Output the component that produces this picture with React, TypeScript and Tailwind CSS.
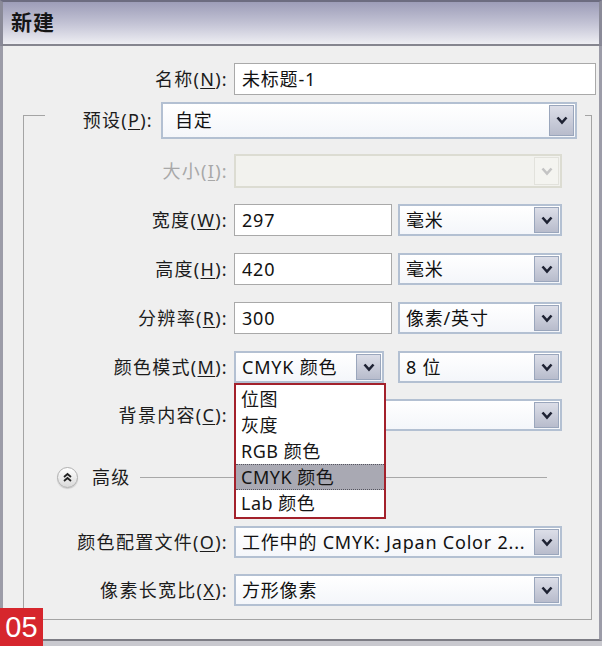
import type { ReactNode } from 'react'

const font = { fontFamily: '"Noto Sans", "Noto Sans CJK SC", sans-serif' }

function Chevron({ disabled }: { disabled?: boolean }) {
  return (
    <svg width="12" height="9" viewBox="0 0 12 9">
      <polyline
        points="1.5,1.5 6,6.5 10.5,1.5"
        fill="none"
        stroke={disabled ? '#c4c4c4' : '#1e2233'}
        strokeWidth="2.6"
        strokeLinejoin="miter"
      />
    </svg>
  )
}

function Label({ text, mk, disabled }: { text: string; mk: string; disabled?: boolean }) {
  return (
    <span className={`tracking-[1.3px] ${disabled ? 'text-[#a8a8a8]' : 'text-[#1c1c1c]'}`}>
      {text}(<span className="underline underline-offset-2">{mk}</span>):
    </span>
  )
}

function Select({
  value,
  w,
  h = 'h-[32px]',
  disabled,
}: {
  value?: ReactNode
  w: string
  h?: string
  disabled?: boolean
}) {
  if (disabled) {
    return (
      <div className={`${w} ${h} flex border-2 border-[#dcdcd2] bg-[#f2f2ee]`}>
        <div className="flex-1" />
        <div className="w-[25px] m-[1px] flex items-center justify-center border border-[#e2e2dc] bg-[#f4f4f0]">
          <Chevron disabled />
        </div>
      </div>
    )
  }
  return (
    <div className={`${w} ${h} flex border-2 border-[#b3c0d2] bg-gradient-to-b from-white to-[#f4f6fa]`}>
      <div className="flex-1 flex items-center pl-[6px] text-[18px] tracking-[0.8px] text-[#111] whitespace-nowrap overflow-hidden">
        {value}
      </div>
      <div className="w-[25px] my-[1px] mr-[1px] flex items-center justify-center border border-[#9aa6bc] bg-gradient-to-b from-[#dcdee8] to-[#b8bccc]">
        <Chevron />
      </div>
    </div>
  )
}

function Input({ value, w }: { value: string; w: string }) {
  return (
    <div className={`${w} h-[32px] flex items-center pl-[7px] border border-[#a9a9a9] bg-white text-[18px] tracking-[0.8px] text-[#111]`}>
      {value}
    </div>
  )
}

function Row({ mt, children, label }: { mt: string; children: ReactNode; label: ReactNode }) {
  return (
    <div className={`${mt} flex items-center`}>
      <div className="w-[204px] text-right text-[18px]">{label}</div>
      <div className="ml-[6px] flex items-center">{children}</div>
    </div>
  )
}

const modes = ['位图', '灰度', 'RGB 颜色', 'CMYK 颜色', 'Lab 颜色']

export default function App() {
  return (
    <div className="w-[602px] h-[646px] relative overflow-hidden bg-[#c9c9cf]" style={font}>
      {/* title bar */}
      <div className="h-[46px] border-t-2 border-t-[#6c6c80] border-b-2 border-b-[#85858f] border-x-[3px] border-x-[#8a8a98] bg-gradient-to-b from-[#9d9db8] via-[#c2c2d4] to-[#eeeef3] flex items-center pl-[8px]">
        <span className="text-[21px] font-bold text-[#161616] tracking-[1px]">新建</span>
      </div>

      {/* body */}
      <div className="h-[595px] bg-[#efefef] border-x-[3px] border-x-[#9c9ca8] border-b-2 border-b-[#7c7c84] flex flex-col">
        {/* name row */}
        <div className="mt-[17px] flex items-center">
          <div className="w-[225px] text-right text-[18px]">
            <Label text="名称" mk="N" />
          </div>
          <div className="ml-[6px]">
            <Input value="未标题-1" w="w-[362px]" />
          </div>
        </div>

        {/* group box */}
        <div className="mt-[20px] ml-[20px] mr-[7px] border-l border-r border-b border-[#a4a4a4] pb-[13px] flex flex-col">
          <div className="mt-[-13px] flex items-start">
            <div className="w-[21px] mt-[13px] border-t border-[#a4a4a4]" />
            <div className="w-[108px] h-[37px] flex items-center justify-end text-[18px]">
              <Label text="预设" mk="P" />
            </div>
            <div className="ml-[8px]">
              <Select value={<span className="pl-[6px]">自定</span>} w="w-[416px]" h="h-[37px]" />
            </div>
            <div className="flex-1 ml-[8px] mt-[13px] border-t border-[#a4a4a4]" />
          </div>

          <Row mt="mt-[15px]" label={<Label text="大小" mk="I" disabled />}>
            <Select w="w-[328px]" h="h-[34px]" disabled />
          </Row>

          <Row mt="mt-[16px]" label={<Label text="宽度" mk="W" />}>
            <Input value="297" w="w-[158px]" />
            <div className="ml-[6px]">
              <Select value="毫米" w="w-[164px]" />
            </div>
          </Row>

          <Row mt="mt-[17px]" label={<Label text="高度" mk="H" />}>
            <Input value="420" w="w-[158px]" />
            <div className="ml-[6px]">
              <Select value="毫米" w="w-[164px]" />
            </div>
          </Row>

          <Row mt="mt-[17px]" label={<Label text="分辨率" mk="R" />}>
            <Input value="300" w="w-[158px]" />
            <div className="ml-[6px]">
              <Select value="像素/英寸" w="w-[164px]" />
            </div>
          </Row>

          <Row mt="mt-[17px]" label={<Label text="颜色模式" mk="M" />}>
            <div className="relative">
              <Select value="CMYK 颜色" w="w-[150px]" />
              {/* open list */}
              <div className="absolute left-0 top-[32px] z-10 w-[152px] border-2 border-[#a3212b] bg-white py-[1px]">
                {modes.map((m) => (
                  <div
                    key={m}
                    className={`h-[26px] flex items-center pl-[5px] text-[18px] tracking-[0.5px] text-[#151515] ${
                      m === 'CMYK 颜色'
                        ? 'bg-[#a9a9b3] border-y border-dotted border-[#55555f]'
                        : ''
                    }`}
                  >
                    {m}
                  </div>
                ))}
              </div>
            </div>
            <div className="ml-[14px]">
              <Select value="8 位" w="w-[164px]" />
            </div>
          </Row>

          <Row mt="mt-[16px]" label={<Label text="背景内容" mk="C" />}>
            <Select w="w-[328px]" />
          </Row>

          {/* advanced */}
          <div className="mt-[34px] h-[24px] flex items-center">
            <div className="ml-[33px] w-[21px] h-[21px] rounded-full border border-[#b0b0b0] bg-gradient-to-b from-white to-[#dadada] flex items-center justify-center shadow-[0_1px_1px_rgba(0,0,0,0.15)]">
              <svg width="11" height="11" viewBox="0 0 11 11">
                <polyline points="2,5 5.5,2 9,5" fill="none" stroke="#222" strokeWidth="1.8" />
                <polyline points="2,9 5.5,6 9,9" fill="none" stroke="#222" strokeWidth="1.8" />
              </svg>
            </div>
            <span className="ml-[14px] text-[18px] tracking-[1.3px] text-[#1c1c1c]">高级</span>
            <div className="ml-[9px] w-[407px] border-t border-[#a8a8a8]" />
          </div>

          <Row mt="mt-[37px]" label={<Label text="颜色配置文件" mk="O" />}>
            <Select value="工作中的 CMYK: Japan Color 2..." w="w-[328px]" />
          </Row>

          <Row mt="mt-[16px]" label={<Label text="像素长宽比" mk="X" />}>
            <Select value="方形像素" w="w-[328px]" />
          </Row>
        </div>
      </div>

      {/* figure badge */}
      <div
        className="absolute left-0 bottom-0 w-[43px] h-[38px] bg-[#d6262d] flex items-center justify-center text-white text-[29px] leading-none"
        style={{ fontFamily: '"Liberation Sans", sans-serif' }}
      >
        05
      </div>
    </div>
  )
}
